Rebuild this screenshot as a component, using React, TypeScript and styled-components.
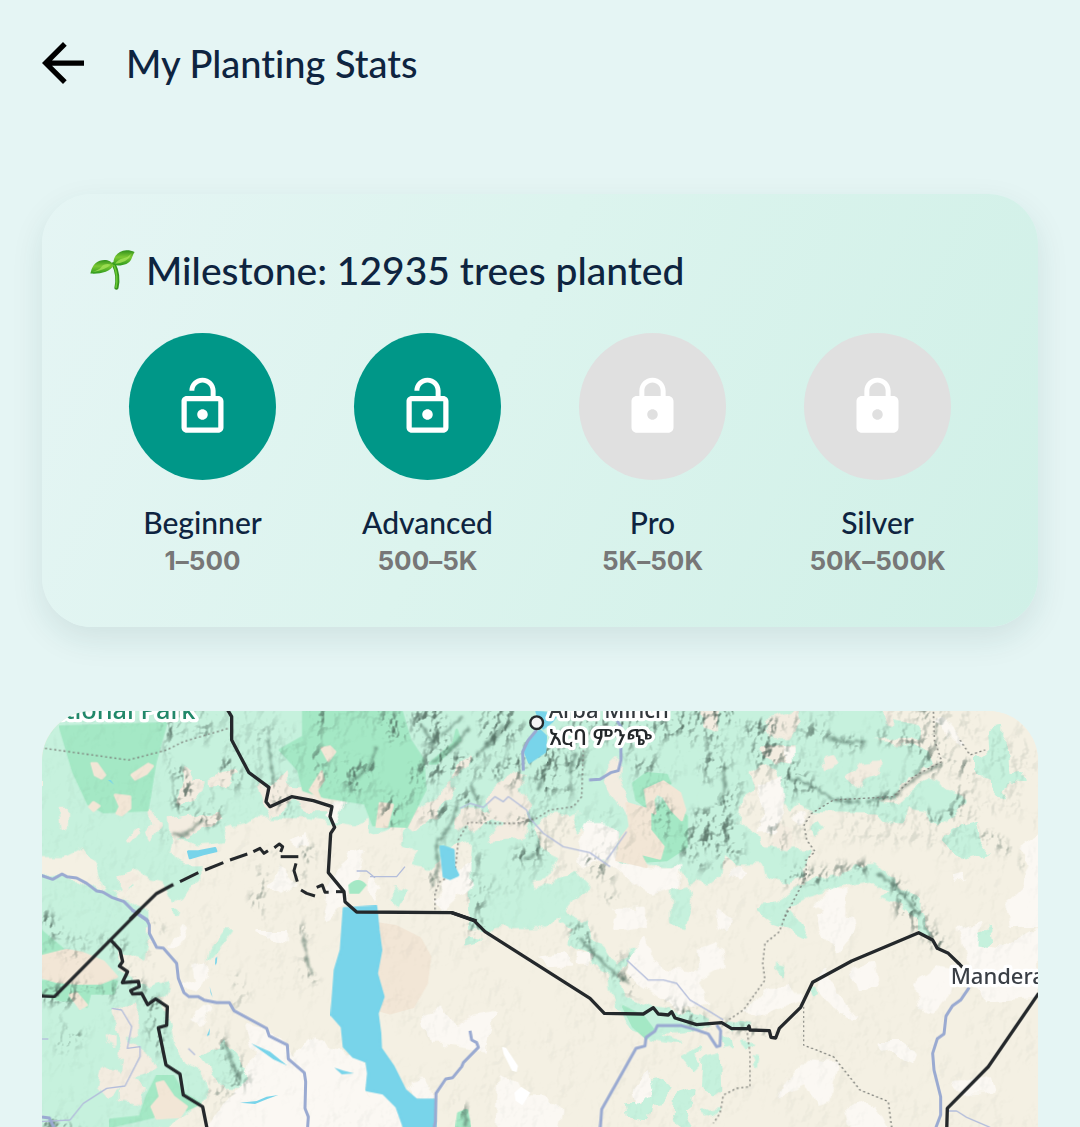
import React from "react";
import styled, { createGlobalStyle } from "styled-components";

const GlobalStyle = createGlobalStyle`
  * { box-sizing: border-box; }
  body { margin: 0; background: #e5f5f4; }
`;

const heading = `Lato, "Open Sans", sans-serif`;
const ink = "#0e2440";

const Screen = styled.main`
  min-height: 100vh;
  display: flex;
  flex-direction: column;
  padding: 0 42px;
  background: #e5f5f4;
  color: ${ink};
  font-variant-ligatures: none;
`;

const Header = styled.header`
  display: flex;
  align-items: center;
  gap: 42px;
  height: 126px;
`;

const BackButton = styled.button`
  display: flex;
  padding: 0;
  border: 0;
  background: none;
  color: #000;
  cursor: pointer;
`;

const Title = styled.h1`
  margin: 0;
  font-family: ${heading};
  font-size: 38px;
  font-weight: 500;
  line-height: 48px;
`;

const Card = styled.section`
  margin-top: 68px;
  padding: 48px;
  border-radius: 50px;
  background: linear-gradient(115deg, #e5f5f4 0%, #dcf4ee 45%, #d0f0e7 100%);
  box-shadow: 0 12px 32px rgba(20, 70, 65, 0.1);
`;

const CardTitle = styled.h2`
  display: flex;
  align-items: center;
  gap: 11px;
  margin: 0;
  font-family: ${heading};
  font-size: 39px;
  font-weight: 500;
  line-height: 56px;
`;

const Levels = styled.ul`
  display: grid;
  grid-template-columns: repeat(4, 1fr);
  margin: 35px 0 0;
  padding: 0;
  list-style: none;
`;

const Level = styled.li`
  display: flex;
  flex-direction: column;
  align-items: center;
`;

const Badge = styled.span<{ $open: boolean }>`
  display: flex;
  align-items: center;
  justify-content: center;
  width: 147px;
  height: 147px;
  margin-bottom: 22px;
  border-radius: 50%;
  background: ${(p) => (p.$open ? "#009788" : "#e0e0e0")};
  color: #fff;
`;

const LevelName = styled.span`
  font-family: ${heading};
  font-size: 30px;
  font-weight: 500;
  line-height: 40px;
`;

const LevelRange = styled.span`
  font-family: Inter, sans-serif;
  font-size: 26px;
  font-weight: 700;
  line-height: 37px;
  color: #777;
`;

const MapPanel = styled.section`
  flex: 1 0 416px;
  display: flex;
  margin-top: 84px;
  overflow: hidden;
  border-radius: 50px 50px 0 0;
  background: #f4f0e3;
`;

const MapDrawing = styled.svg`
  flex: 1;
  width: 100%;
  height: auto;
  min-height: 416px;
`;

const MapLabel = styled.text`
  font-family: "Noto Sans", "Noto Sans Ethiopic", "Abyssinica SIL", sans-serif;
  paint-order: stroke;
  stroke: #fff;
  stroke-width: 20px;
  stroke-linejoin: round;
`;

const levels = [
  { name: "Beginner", range: "1–500", open: true },
  { name: "Advanced", range: "500–5K", open: true },
  { name: "Pro", range: "5K–50K", open: false },
  { name: "Silver", range: "50K–500K", open: false },
];

function LockIcon({ open }: { open: boolean }) {
  return (
    <svg width="63" height="63" viewBox="0 0 24 24" fill="currentColor" aria-hidden="true">
      {open ? (
        <path d="M12 17c1.1 0 2-.9 2-2s-.9-2-2-2-2 .9-2 2 .9 2 2 2zm6-9h-1V6c0-2.76-2.24-5-5-5S7 3.24 7 6h1.9c0-1.71 1.39-3.1 3.1-3.1 1.71 0 3.1 1.39 3.1 3.1v2H6c-1.1 0-2 .9-2 2v10c0 1.1.9 2 2 2h12c1.1 0 2-.9 2-2V10c0-1.1-.9-2-2-2zm0 12H6V10h12v10z" />
      ) : (
        <path d="M18 8h-1V6c0-2.76-2.24-5-5-5S7 3.24 7 6v2H6c-1.1 0-2 .9-2 2v10c0 1.1.9 2 2 2h12c1.1 0 2-.9 2-2V10c0-1.1-.9-2-2-2zm-6 9c-1.1 0-2-.9-2-2s.9-2 2-2 2 .9 2 2-.9 2-2 2zm3.1-9H8.9V6c0-1.71 1.39-3.1 3.1-3.1 1.71 0 3.1 1.39 3.1 3.1v2z" />
      )}
    </svg>
  );
}

function Seedling() {
  return (
    <svg width="45" height="40" viewBox="0 0 109 122" preserveAspectRatio="none" role="img" aria-label="Seedling">
      <defs>
        <linearGradient id="leaf" x1="0" y1="0" x2="0" y2="1">
          <stop offset="0" stopColor="#2f8f1c" />
          <stop offset=".45" stopColor="#7cc933" />
          <stop offset="1" stopColor="#2d9a1d" />
        </linearGradient>
      </defs>
      <path d="M57 42q14 34 7 74" fill="none" stroke="#35921f" strokeWidth="10" strokeLinecap="round" />
      <path d="M58 46q11 34 5 68" fill="none" stroke="#67c932" strokeWidth="4" strokeLinecap="round" />
      <path d="M57 46C50 26 26 26 14 40 5 50 3 62 1 72c22 2 49-4 56-26z" fill="url(#leaf)" />
      <path d="M57 46C54 22 68 2 88 1c9 0 14 2 20 5-4 8-5 14-8 22-6 15-22 22-43 18z" fill="url(#leaf)" />
      <path d="M5 67q17-5 23-16t23-7Q36 62 5 67M61 42q7-14 20-17t20-15q-7 27-40 32" fill="#a8e45b" opacity=".75" />
    </svg>
  );
}

/* The map is drawn on six sheets, three across and two down. */
const sheets = {
  A: [0, 0],
  B: [990, 0],
  C: [1980, 0],
  D: [0, 630],
  E: [990, 630],
  F: [1980, 630],
} as const;
type Sheet = keyof typeof sheets;
type Shape = [Sheet, string];

const at = (s: Sheet) => `translate(${sheets[s][0]} ${sheets[s][1]})`;

function Areas({ shapes, fill }: { shapes: Shape[]; fill: string }) {
  return (
    <g fill={fill} stroke={fill} strokeWidth="8" strokeLinejoin="round">
      {shapes.map(([s, points], i) => (
        <polygon key={i} points={points} transform={at(s)} />
      ))}
    </g>
  );
}

function Lines({ shapes, ...rest }: { shapes: Shape[] } & React.SVGProps<SVGGElement>) {
  return (
    <g fill="none" strokeLinejoin="round" {...rest}>
      {shapes.map(([s, points], i) => (
        <polyline key={i} points={points} transform={at(s)} />
      ))}
    </g>
  );
}

const grass: Shape[] = [
  ["A", "0,20 1030,20 1030,340 940,375 880,365 800,350 650,350 560,380 550,420 470,430 390,400 380,450 430,500 480,500 480,540 400,600 370,540 330,530 280,500 250,520 280,560 200,580 160,480 130,440 70,470 0,470"],
  ["A", "0,530 60,525 180,575 260,600 330,640 330,680 0,680"],
  ["B", "0,20 1040,20 1040,460 1010,520 960,550 930,500 880,500 780,480 740,500 650,440 640,370 620,390 630,330 600,340 560,330 480,380 520,460 560,480 530,530 480,540 500,570 620,520 660,560 600,600 560,650 500,680 300,680 300,520 310,440 270,420 240,440 200,470 190,500 120,490 150,450 100,430 110,340 60,380 0,400"],
  ["B", "650,440 730,330 720,230 760,180 780,280 720,300 690,370 640,440"],
  ["B", "70,560 110,570 90,620 70,600"],
  ["B", "910,570 950,560 965,610 940,680 910,670"],
  ["C", "0,20 560,20 560,60 660,80 660,110 560,110 500,120 560,130 680,150 690,190 620,240 580,290 500,300 590,310 680,235 790,300 780,330 750,350 710,380 680,330 620,320 610,365 570,365 540,340 340,335 300,300 270,330 240,290 240,230 190,190 140,210 160,270 120,290 110,370 170,400 190,450 330,450 310,500 270,550 200,530 190,490 110,490 70,460 60,520 20,550 0,540"],
  ["C", "865,90 900,85 900,120 920,150 925,225 965,220 970,245 925,240 905,300 880,270 870,230 835,220 835,170 870,160"],
  ["C", "730,420 790,380 830,370 835,420 865,460 790,475"],
  ["C", "335,385 360,370 370,380 345,405"],
  ["C", "180,620 230,610 290,570 310,540 420,530 460,500 530,495 600,560 660,600 660,660 590,610 540,590 570,570 520,545 420,560 320,590 260,620 310,680 260,670"],
  ["D", "0,-40 40,-60 190,20 300,0 320,80 310,150 240,110 230,180 330,240 380,220 370,260 330,250 375,290 385,340 400,400 430,460 480,480 500,560 440,600 350,660 0,660"],
  ["D", "400,0 410,0 405,20"],
  ["D", "505,150 510,120 550,65 575,65 540,110"],
  ["D", "490,440 540,420 550,390 580,430 620,480 610,530 560,530 520,480"],
  ["D", "885,580 900,580 905,620 890,630"],
  ["E", "300,0 330,60 400,50 420,10 480,50 520,40 500,0"],
  ["E", "290,100 300,85 325,90"],
  ["E", "570,0 600,20 650,40 655,80 620,70 700,110 740,170 790,120 740,190 760,260 830,290 940,310 1020,330 1020,350 860,370 935,400 840,385 770,340 720,240 715,190 670,160 660,120 590,100 615,60 570,40"],
  ["E", "930,0 945,0 930,40 915,40"],
  ["E", "940,220 965,205 975,220 955,235"],
  ["E", "940,440 990,410 970,440 990,460 970,480"],
  ["E", "835,520 880,510 895,540 870,580 840,580 830,630 780,620 775,580 820,580"],
  ["E", "920,550 970,535 965,580 940,600 960,650 925,650 915,610"],
  ["F", "170,-5 240,10 295,30 320,85 290,75 270,50 220,35"],
  ["F", "235,165 255,170 250,200 232,190"],
  ["F", "330,240 345,230 350,250 335,255"],
  ["F", "655,15 670,20 685,70 655,60"],
  ["F", "840,70 870,55 875,90 850,120 838,115"],
  ["F", "15,440 55,430 60,540 40,555 10,520"],
  ["F", "65,385 90,380 95,410 75,415"],
  ["F", "130,395 155,400 145,415"],
  ["F", "160,450 175,440 170,470"],
  ["F", "10,605 60,595 30,618"],
  ["F", "80,335 140,345 130,360 90,350"],
];

const forest: Shape[] = [
  ["A", "60,80 378,70 345,190 322,330 190,336 145,312 100,215"],
  ["A", "790,20 1080,20 1110,120 1150,180 1155,270 1100,380 1000,375 975,310 910,300 850,290 790,270 775,210 720,150 790,110"],
  ["B", "790,250 830,220 890,225 900,250 860,240 850,340 890,290 950,350 950,440 890,480 810,485 810,455 870,470 870,430 840,380 840,330 800,300"],
  ["B", "180,190 250,130 260,90 270,120 200,190"],
  ["D", "0,60 60,110 80,130 0,140"],
  ["D", "0,215 60,210 180,200 230,215 220,250 150,250 140,290 110,270 60,270 0,250"],
  ["D", "320,560 350,500 400,500 430,550 480,580 440,600 380,540 340,620 210,650 210,630 300,620"],
  ["E", "265,610 290,600 300,650 260,650"],
  ["E", "760,290 820,320 850,360 830,385 790,350"],
];

const sand: Shape[] = [
  ["A", "155,190 170,190 195,225 185,235 165,225"],
  ["A", "275,225 325,192 338,198 320,220 285,238"],
  ["A", "225,285 270,290 270,325 245,345 230,340 240,320"],
  ["A", "148,320 160,307 178,318 160,332"],
  ["A", "845,145 870,140 885,155 865,182"],
  ["A", "810,270 845,215 850,240 830,270 840,295"],
  ["A", "1020,310 1058,315 1040,380 1010,380"],
  ["B", "825,270 880,245 930,280 945,330 935,360 905,330 880,290 860,280 850,300 855,340 835,330"],
  ["B", "770,310 840,330 840,390 880,440 870,475 810,460 830,500 740,480 750,420 780,380"],
  ["D", "0,140 80,120 130,130 190,155 230,200 180,220 110,220 50,215 0,200"],
  ["D", "90,255 110,250 140,285 120,295"],
  ["D", "350,520 370,515 400,560 440,590 420,620 350,625 335,590 360,560"],
  ["E", "20,40 80,50 150,85 180,140 170,220 130,290 60,310 25,300 40,240 20,190 30,120"],
];

const meadow: Shape[] = [
  ["A", "430,205 450,215 450,250 490,250 480,280 420,310 430,260"],
  ["A", "510,240 540,220 590,210 560,255 510,255"],
  ["A", "390,360 530,340 540,355 440,410 395,405"],
  ["A", "60,330 80,330 80,385 65,380"],
  ["A", "335,330 360,370 330,415 322,400 340,380"],
  ["A", "265,425 290,385 290,405 270,430"],
  ["A", "240,530 280,520 290,540 250,580 240,560"],
  ["A", "655,250 690,270 740,215 740,260 880,275 910,290 890,330 800,330 760,300 690,350 680,330"],
  ["B", "250,230 295,165 290,200"],
  ["B", "200,290 245,250 250,275 190,350 140,390 110,380 120,340"],
  ["B", "360,290 370,270 430,215 460,225 440,260 480,310 470,370 460,410 360,420 400,370 360,350"],
  ["B", "260,390 270,330 350,330 360,360 310,400 290,370"],
  ["B", "700,220 745,175 740,240 770,290 770,340 740,300"],
  ["B", "1000,30 1040,30 1040,90 1010,80"],
  ["C", "195,60 290,35 300,60 270,110 210,110"],
  ["C", "185,140 280,140 280,180 220,190"],
  ["C", "375,175 395,168 408,185 380,200"],
  ["C", "445,230 480,190 535,185 530,220 490,235 470,260"],
  ["C", "550,35 580,35 575,80 560,75"],
  ["C", "225,420 240,370 270,390 260,450 230,445"],
  ["D", "220,300 250,290 295,290 290,360 260,390 330,440 345,480 270,500 310,530 300,580 240,570 240,530 200,560 175,530 185,470 240,490 250,420"],
  ["D", "195,370 220,380 220,410 200,400"],
];

const pale: Shape[] = [
  ["A", "760,420 800,400 800,430 765,440"],
  ["A", "860,340 910,300 890,360 850,350"],
  ["A", "720,500 760,550 720,580 690,560"],
  ["A", "930,460 970,450 940,560 890,640 850,660 870,560"],
  ["B", "650,370 700,370 740,400 740,480 850,510 900,510 930,490 920,560 850,580 780,540 700,470 640,500 630,430"],
  ["B", "230,540 300,490 300,560 220,630 200,600"],
  ["B", "0,540 30,560 10,600"],
  ["C", "180,260 240,230 250,300 230,390 180,390 190,320"],
  ["C", "260,140 280,145 280,185 262,180"],
  ["C", "710,60 730,60 790,130 780,135"],
  ["C", "960,440 1020,400 1020,680 930,680 920,610 970,560 990,490"],
  ["C", "350,620 400,570 435,580 440,680 370,680 390,640"],
  ["C", "90,520 120,500 148,520 120,540"],
  ["C", "760,530 790,522 795,538 770,544"],
  ["C", "280,350 320,340 300,375"],
  ["D", "395,110 430,50 440,60 410,110"],
  ["D", "650,70 740,70 740,100 690,80"],
  ["D", "460,170 495,160 500,200 470,240 430,230 470,210"],
  ["D", "455,330 500,290 510,300 480,340"],
  ["D", "620,350 720,380 760,440 820,380 870,420 940,430 980,480 980,560 1030,560 1030,660 500,660 560,570 620,520 640,430"],
  ["E", "510,140 580,130 610,160 540,160"],
  ["E", "630,130 660,130 655,160 630,160"],
  ["E", "740,0 820,0 830,50 730,60"],
  ["E", "160,320 220,300 250,350 310,320 370,310 350,420 220,400 180,400"],
  ["E", "390,500 430,520 450,560 520,560 570,600 560,660 380,660"],
  ["E", "790,540 830,490 840,540 800,580"],
  ["E", "820,90 840,140 890,180 980,190 1010,280 930,300 860,250 770,190 780,150"],
  ["E", "120,520 160,510 190,560 140,560"],
  ["E", "0,540 60,560 90,600 90,660 0,660"],
  ["F", "350,20 400,0 450,20 460,70 420,120 370,70"],
  ["F", "50,0 90,20 80,60 60,50"],
  ["F", "0,120 50,100 70,160 0,200"],
  ["F", "370,180 410,250 470,320 420,310 360,240"],
  ["F", "460,180 520,160 530,220 480,240"],
  ["F", "650,220 710,170 760,180 750,250 700,310 660,290"],
  ["F", "780,60 840,40 830,110 900,120 1010,60 1010,260 870,270 830,230"],
  ["F", "540,400 600,400 650,430 640,455 580,430"],
  ["F", "320,450 410,460 400,500 390,570 350,580 320,520 240,560 260,510"],
  ["F", "490,580 530,600 560,660 450,660 440,600"],
  ["F", "200,240 270,230 300,270 200,310 140,300"],
  ["F", "760,520 870,500 880,545 780,550"],
];

const water: Shape[] = [
  ["A", "445,455 475,455 525,445 528,453 490,462 450,474"],
  ["B", "465,155 480,115 510,92 527,108 525,155 478,187"],
  ["B", "500,35 560,45 545,65 520,85 510,60"],
  ["B", "212,440 220,440 250,450 252,500 264,525 240,536 222,530"],
  ["D", "912,-5 1008,-10 1015,60 1023,120 1010,190 1030,260 1012,310 1020,370 1022,415 1060,470 1095,540 1130,570 1185,570 1187,660 1095,660 1070,590 1030,550 980,540 985,490 980,455 940,440 912,410 906,350 875,315 885,180 903,120"],
];

const ponds: Shape[] = [
  ["A", "204,240 212,240 222,254"],
  ["D", "883,473 910,482 942,490 905,493"],
  ["D", "633,400 690,425 742,467 700,448"],
  ["D", "600,578 650,573 680,560 715,555 680,568 645,582"],
  ["D", "525,165 526,145 532,140 530,160"],
  ["D", "509,230 518,262 512,250"],
  ["D", "500,378 510,355 508,375"],
];

const rivers: Shape[] = [
  ["A", "0,525 38,538 66,522 80,530 110,534 140,550 170,573 188,576 215,592 252,605 275,628 325,665"],
  ["D", "275,0 320,28 328,45 328,70 350,112 370,114 410,160 415,205 432,248 447,260 475,260 492,270 530,278 568,278 582,302 680,355 688,378 742,405 745,447 793,488 797,515 795,595 805,620 802,665"],
  ["D", "0,620 28,624 45,660"],
  ["B", "500,90 475,120 458,155 460,212"],
  ["B", "735,50 752,80 753,180 745,212 722,218 690,238 657,240"],
  ["E", "300,362 305,390 320,398 325,412 280,458 275,470 248,503 227,507 198,550 196,635 190,665"],
  ["E", "690,665 695,598 798,415 825,408 828,382 855,363 862,347 935,347 980,360 1015,372 1040,410 1050,407 1052,362 1040,345"],
  ["F", "808,232 782,270 757,288 738,318 732,372 712,386 698,430 702,480 722,560 722,615 705,660"],
];

const streams: Shape[] = [
  ["B", "270,325 300,310 340,322 375,290 400,305 415,290 470,330 480,355 520,400 580,440 660,458 720,500"],
  ["B", "710,480 770,395"],
  ["B", "0,530 80,530 105,500"],
  ["A", "950,513 980,513 1005,533"],
  ["D", "0,635 90,630 130,580 200,535 255,528 300,440 300,410 262,415 275,350 245,300 215,295"],
  ["D", "445,415 465,435"],
  ["E", "770,150 835,210 880,210 920,220 960,270 1020,305 1060,330"],
  ["F", "745,603 770,603 800,622 870,652"],
  ["D", "0,387 25,387"],
];

const borders: Shape[] = [
  ["A", "557,20 575,50 575,120 627,218 687,262 678,305 690,320 755,290 820,302 876,320 870,350 884,382 872,400 865,518 912,575 915,605 950,636 1235,638 1310,663"],
  ["E", "245,8 312,32 345,65 660,265 703,310 820,312 850,293 865,312 895,315 905,305 915,324 980,344 1055,338 1085,356 1133,356 1137,348 1140,360 1198,362 1203,382 1217,384 1228,355 1292,292 1328,217 1445,153 1646,68 1688,90 1702,115 1735,130 1778,172"],
  ["A", "400,553 350,580 270,658"],
  ["D", "300,0 43,260 0,258"],
  ["D", "212,90 240,120 248,155 238,168 263,185 247,218 295,214 298,230 272,242 278,252 305,250 323,284 347,267 382,290 380,346 355,353 378,465 420,492 430,555 488,590 502,660"],
  ["F", "1016,250 865,470 742,595 740,665"],
];

const dashed: Shape[] = [
  ["A", "420,545 475,518"], ["A", "495,510 550,488"], ["A", "570,480 622,462"],
  ["A", "640,455 660,445 672,460 684,452"], ["A", "703,443 718,432 728,440 722,456"],
  ["A", "722,470 775,470"], ["A", "768,490 762,512 772,545"], ["A", "783,570 800,580 825,588"],
  ["A", "830,562 847,555 855,577 866,577"], ["A", "888,575 912,575"],
];

const regions: Shape[] = [
  ["A", "15,145 265,180 380,150 430,125 565,85"],
  ["B", "640,150 635,290 610,320 540,330 500,355 440,370 370,370 295,367 265,420 255,520 210,545 195,580 195,640"],
  ["C", "700,35 703,120 725,185 640,230 580,290 400,300 335,340 312,375 320,420 345,455 318,480 318,530 250,660"],
  ["F", "262,0 238,65 195,100 188,160 195,210 130,300 85,330"],
  ["F", "310,290 310,405 400,440 480,540 565,575 575,655"],
  ["F", "140,355 150,430 150,530 110,535 70,555 60,610 40,640"],
  ["C", "780,120 810,165 855,150"],
];

/* Thick bands where the hill shading is strong. */
const ranges: [Sheet, string, number][] = [
  ["A", "400,40 400,160 440,260 400,400 520,350", 50],
  ["A", "480,40 560,200 530,300 580,230", 50],
  ["A", "680,100 700,240 740,330", 40],
  ["A", "850,40 830,250 1000,190 930,270", 36],
  ["A", "640,650 660,520", 36],
  ["A", "720,460 780,530 800,450", 36],
  ["B", "60,60 120,240 60,350", 60],
  ["B", "170,350 260,310 200,440 190,560", 36],
  ["B", "180,60 300,40 200,190 350,100 440,40", 110],
  ["B", "290,280 420,230 560,100 520,270 590,240 620,50", 90],
  ["B", "360,350 460,350 500,450 440,480", 50],
  ["B", "330,500 330,620", 50],
  ["B", "700,60 820,150 960,100 1030,60", 130],
  ["B", "660,480 700,520 720,600", 36],
  ["B", "880,330 940,430 1010,480", 60],
  ["C", "0,60 60,260 20,440 80,430", 110],
  ["C", "60,70 240,50 200,160 270,240", 90],
  ["C", "280,80 430,120 620,120 720,190 590,290 440,310 270,240", 40],
  ["C", "680,40 730,180 800,170 780,320 700,340", 50],
  ["C", "850,340 850,400 930,450 950,500", 40],
  ["C", "240,540 320,520 340,540 470,490 560,530 670,650", 40],
  ["C", "220,390 240,440", 36],
  ["D", "10,30 60,110 170,120 230,100", 60],
  ["D", "0,250 80,250 220,240", 50],
  ["D", "60,290 120,370 70,400", 40],
  ["D", "270,200 340,280 360,420 330,340", 36],
  ["D", "350,50 360,180 390,170", 34],
  ["D", "600,215 600,270", 34],
  ["D", "560,400 600,510 540,540", 50],
  ["D", "790,60 810,190 830,200", 30],
  ["D", "20,640 120,660", 40],
  ["E", "310,0 320,50", 50],
  ["E", "620,60 670,110 720,170 800,240 880,290 980,330", 40],
  ["E", "740,130 780,140", 36],
  ["E", "280,600 285,660", 36],
  ["F", "600,0 680,60 740,130", 40],
  ["F", "60,350 190,380 240,400", 30],
];

const ridges: Shape[] = [
  ["B", "20,140 0,200 -50,240 -60,275"],
  ["B", "260,320 245,370 200,430 205,500 185,560"],
  ["B", "185,190 230,160 260,130 300,80"],
  ["B", "150,70 190,130 200,90"],
  ["B", "210,110 280,50"],
  ["B", "320,170 400,70"],
  ["B", "510,405 500,460 460,480"],
  ["B", "300,250 320,300"],
  ["B", "430,60 350,140"],
  ["B", "600,220 615,160"],
  ["B", "505,270 530,190"],
  ["C", "270,235 300,240 350,265 400,300 480,305"],
  ["C", "380,110 440,128 500,122"],
  ["C", "500,305 580,290 640,240 720,190"],
  ["C", "530,520 580,550 630,610 660,650"],
  ["C", "70,200 75,270 60,310"],
  ["A", "685,120 700,240"],
  ["A", "395,400 430,405 490,360"],
  ["D", "555,400 585,480 600,510"],
  ["D", "790,70 805,170 818,195"],
  ["E", "630,85 700,160 780,220"],
  ["E", "285,605 288,650"],
];

function RegionMap() {
  return (
    <MapDrawing viewBox="6 33 2988 1248" preserveAspectRatio="xMinYMin slice" role="img" aria-label="Map of planted trees">
      <defs>
        <filter id="ragged" x="0" y="0" width="3000" height="1300" filterUnits="userSpaceOnUse">
          <feTurbulence type="fractalNoise" baseFrequency="0.022" numOctaves="2" seed="8" />
          <feDisplacementMap in="SourceGraphic" scale="38" xChannelSelector="R" yChannelSelector="G" />
        </filter>
        <filter id="jagged" x="0" y="0" width="3000" height="1300" filterUnits="userSpaceOnUse">
          <feTurbulence type="fractalNoise" baseFrequency="0.06" numOctaves="2" seed="3" result="n" />
          <feDisplacementMap in="SourceGraphic" in2="n" scale="20" xChannelSelector="R" yChannelSelector="G" />
          <feGaussianBlur stdDeviation="3" />
        </filter>
        <filter id="relief" x="0" y="0" width="3000" height="1300" filterUnits="userSpaceOnUse" colorInterpolationFilters="sRGB">
          <feTurbulence type="fractalNoise" baseFrequency="0.032 0.022" numOctaves="3" seed="21" result="n" />
          <feColorMatrix in="n" values="0 0 0 0 0  0 0 0 0 0  0 0 0 0 0  1 0 0 0 0" result="h" />
          <feDiffuseLighting in="h" surfaceScale="30" diffuseConstant="1" lightingColor="#fff">
            <feDistantLight azimuth="220" elevation="52" />
          </feDiffuseLighting>
          <feColorMatrix values="0 0 0 0 .27  0 0 0 0 .36  0 0 0 0 .32  -1.6 0 0 0 1.03" result="shade" />
          <feTurbulence type="fractalNoise" baseFrequency="0.009" numOctaves="2" seed="5" />
          <feColorMatrix values="0 0 0 0 0  0 0 0 0 0  0 0 0 0 0  4.5 0 0 0 -1.6" result="patches" />
          <feComposite in="shade" in2="patches" operator="in" />
        </filter>
        <filter id="soft" x="-100" y="-100" width="3200" height="1500" filterUnits="userSpaceOnUse">
          <feGaussianBlur stdDeviation="12" />
        </filter>
        <mask id="hills" x="0" y="0" width="3000" height="1300" maskUnits="userSpaceOnUse">
          <rect width="3000" height="1300" fill="#000" fillOpacity="0" />
          <rect width="3000" height="1300" fill="#fff" fillOpacity=".035" />
          <g filter="url(#soft)" fill="none" stroke="#c4c4c4" strokeLinejoin="round" strokeLinecap="round">
            <path d="M380 0H2980V400L2700 470 2440 420 1900 400 1500 560 1300 600 1290 430 1150 330 700 300 380 200z" fill="#fff" fillOpacity=".1" stroke="none" />
            {ranges.map(([s, points, width], i) => (
              <polyline key={i} points={points} strokeWidth={width} transform={at(s)} />
            ))}
          </g>
        </mask>
      </defs>
      <rect width="3000" height="1300" fill="#f4f0e3" />
      <g filter="url(#ragged)">
        <Areas shapes={grass} fill="#c6f1dd" />
        <Areas shapes={meadow} fill="#f3ece0" />
        <Areas shapes={pale} fill="#fbf8f3" />
      </g>
      <Areas shapes={forest} fill="#a4e8c5" />
      <Areas shapes={sand} fill="#f2e6d6" />
      <rect width="3000" height="1300" filter="url(#relief)" mask="url(#hills)" />
      <Lines shapes={ridges} filter="url(#jagged)" stroke="#4d6a5e" strokeOpacity=".6" strokeWidth="8" />
      <path d="M1386 1041l12 2 36 55-4 18-14-4-25-50zM1423 1178l20-18 28 18-24 38-20-14z" fill="#fff" />
      <path d="M925 555q30-30 55 0l-22 26h-30z" fill="#a4e8c5" />
      <Lines shapes={streams} stroke="#b3bddb" strokeWidth="4" />
      <Lines shapes={regions} stroke="#7d7f7a" strokeWidth="4" strokeDasharray="6 8" />
      <Areas shapes={water} fill="#78d4ea" />
      <g fill="#78d4ea">
        {ponds.map(([s, points], i) => (
          <polygon key={i} points={points} transform={at(s)} />
        ))}
      </g>
      <Lines shapes={rivers} stroke="#9aaad1" strokeWidth="9" />
      <Lines shapes={borders} stroke="#24282b" strokeWidth="10" />
      <Lines shapes={dashed} stroke="#24282b" strokeWidth="9" />
      <circle cx="1490" cy="68" r="19" fill="#f4f4f4" stroke="#24282b" strokeWidth="7" />
      <MapLabel x="466" y="56" fontSize="76" textAnchor="end" fontWeight="500" fill="#22886a">National Park</MapLabel>
      <MapLabel x="1526" y="54" fontSize="66" fontWeight="500" fill="#33383d">Arba Minch</MapLabel>
      <MapLabel x="1526" y="136" fontSize="68" fontWeight="500" fill="#24282b">አርባ ምንጭ</MapLabel>
      <MapLabel x="2732" y="852" fontSize="66" fontWeight="500" fill="#3a3f46">Mandera</MapLabel>
    </MapDrawing>
  );
}

export default function App() {
  return (
    <>
      <GlobalStyle />
      <Screen>
        <Header>
          <BackButton type="button" aria-label="Back">
            <svg width="42" height="42" viewBox="4 4 16 16" fill="currentColor" aria-hidden="true">
              <path d="M20 11H7.83l5.59-5.59L12 4l-8 8 8 8 1.41-1.41L7.83 13H20v-2z" />
            </svg>
          </BackButton>
          <Title>My Planting Stats</Title>
        </Header>
        <Card>
          <CardTitle>
            <Seedling />
            Milestone: 12935 trees planted
          </CardTitle>
          <Levels>
            {levels.map((l) => (
              <Level key={l.name}>
                <Badge $open={l.open}>
                  <LockIcon open={l.open} />
                </Badge>
                <LevelName>{l.name}</LevelName>
                <LevelRange>{l.range}</LevelRange>
              </Level>
            ))}
          </Levels>
        </Card>
        <MapPanel>
          <RegionMap />
        </MapPanel>
      </Screen>
    </>
  );
}
